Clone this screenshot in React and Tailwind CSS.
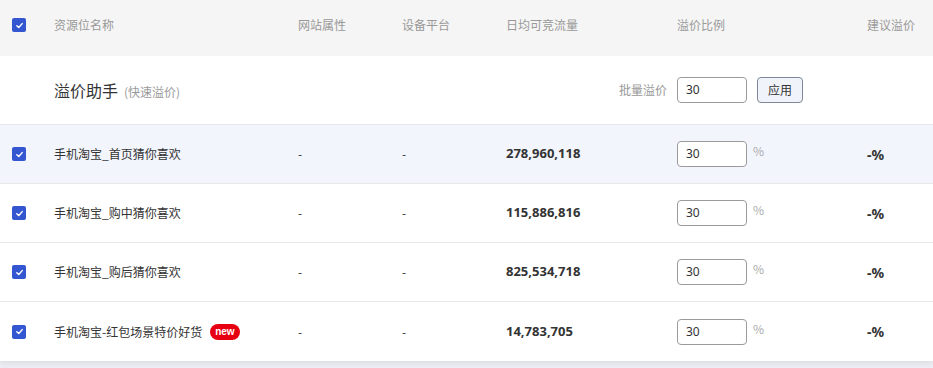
import React from "react";

const font = { fontFamily: '"Noto Sans CJK SC", "Noto Sans", sans-serif' };

function Check() {
  return (
    <span className="flex h-[14px] w-[14px] items-center justify-center rounded-[2px] bg-[#3556d1]">
      <svg width="9" height="9" viewBox="0 0 10 10" fill="none">
        <path d="M2 5.2 L4.2 7.2 L8 2.9" stroke="#fff" strokeWidth="1.6" strokeLinecap="round" strokeLinejoin="round" />
      </svg>
    </span>
  );
}

const cols = "grid grid-cols-[54px_244px_104px_104px_171px_190px_66px] items-center";

const rows = [
  { name: "手机淘宝_首页猜你喜欢", flow: "278,960,118", active: true },
  { name: "手机淘宝_购中猜你喜欢", flow: "115,886,816" },
  { name: "手机淘宝_购后猜你喜欢", flow: "825,534,718" },
  { name: "手机淘宝-红包场景特价好货", flow: "14,783,705", isNew: true },
];

function Input() {
  return (
    <div className="flex h-[26px] w-[70px] items-center rounded-[4px] border border-[#9a9a9a] bg-white pl-[8px] text-[12px] text-[#333]" style={{ fontFamily: '"Noto Sans", sans-serif' }}>
      30
    </div>
  );
}

export default function App() {
  return (
    <div className="h-[368px] w-[933px] overflow-hidden bg-[#eceef4]" style={font}>
      <div className="bg-white shadow-[0_2px_6px_rgba(0,0,0,0.08)]">
        <div className={`${cols} h-[56px] bg-[#f5f5f5] pb-[6px] text-[12px] text-[#999]`}>
          <div className="pl-[12px]"><Check /></div>
          <div>资源位名称</div>
          <div>网站属性</div>
          <div>设备平台</div>
          <div>日均可竞流量</div>
          <div>溢价比例</div>
          <div>建议溢价</div>
        </div>
        <div className="flex h-[69px] items-center border-b border-[#e6e8ee] pl-[54px] pr-[130px]">
          <div className="flex items-baseline">
            <span className="text-[16px] text-[#333]">溢价助手</span>
            <span className="ml-[6px] text-[12px] text-[#999]">(快速溢价)</span>
          </div>
          <div className="ml-auto flex items-center">
            <span className="mr-[10px] text-[12px] text-[#999]">批量溢价</span>
            <Input />
            <div className="ml-[10px] flex h-[26px] w-[46px] items-center justify-center rounded-[4px] border border-[#7d8799] bg-[#f0f4fa] text-[12px] text-[#333]">
              应用
            </div>
          </div>
        </div>
        {rows.map((r, i) => (
          <div
            key={i}
            className={`${cols} h-[59px] ${i < rows.length - 1 ? "border-b border-[#e8e8e8]" : ""} ${r.active ? "bg-[#f2f5fc]" : "bg-white"}`}
          >
            <div className="pl-[12px]"><Check /></div>
            <div className="flex items-center text-[12px] text-[#333]">
              {r.name}
              {r.isNew && (
                <span className="ml-[8px] flex h-[16px] items-center rounded-full bg-[#e60012] px-[5px] text-[10px] font-bold leading-none text-white" style={{ fontFamily: '"Liberation Sans", sans-serif' }}>
                  new
                </span>
              )}
            </div>
            <div className="text-[12px] text-[#333]">-</div>
            <div className="text-[12px] text-[#333]">-</div>
            <div className="text-[13px] font-bold text-[#333]" style={{ fontFamily: '"Noto Sans", sans-serif' }}>{r.flow}</div>
            <div className="flex items-center">
              <Input />
              <span className="ml-[6px] -mt-[6px] text-[12px] text-[#aaa]">%</span>
            </div>
            <div className="text-[14px] font-bold text-[#333]" style={{ fontFamily: '"Noto Sans", sans-serif' }}>-%</div>
          </div>
        ))}
      </div>
    </div>
  );
}
